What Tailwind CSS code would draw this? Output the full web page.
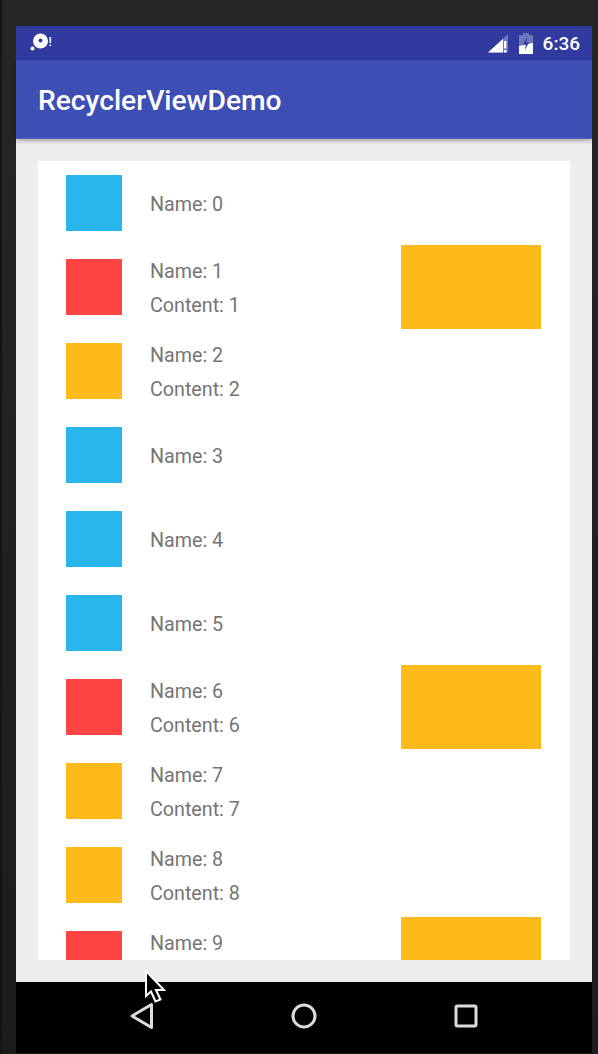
<!DOCTYPE html>
<html>
<head>
<meta charset="utf-8">
<script src="https://cdn.jsdelivr.net/npm/@tailwindcss/browser@4"></script>
</head>
<body class="m-0">
<div class="relative w-[598px] h-[1054px] overflow-hidden bg-gradient-to-b from-[#262626] to-[#1c1c1c] border-l-2 border-[#141414] pt-[26px] pl-[14px] font-['Roboto',sans-serif]">
  <div class="flex flex-col h-[1027px] w-[576px]">
    <div class="flex items-center justify-between h-[34px] bg-[#303a9f] pl-[14px] pr-[12px] text-white">
      <svg width="24" height="20" viewBox="0 0 24 20">
        <circle cx="10.5" cy="8" r="7.5" fill="#fff"/>
        <circle cx="10.5" cy="7.5" r="2" fill="#303a9f"/>
        <circle cx="2.5" cy="15.5" r="2" fill="#fff"/>
        <rect x="19.5" y="4" width="1.6" height="6" fill="#fff"/>
        <rect x="19.5" y="11.5" width="1.6" height="1.6" fill="#fff"/>
      </svg>
      <div class="flex items-center">
        <svg width="21" height="21" viewBox="0 0 21 21" class="mr-[10px]">
          <path d="M0 19.5 L20 1 V19.5 Z" fill="#fff" fill-opacity="0.3"/>
          <path d="M0 19.5 L15 6 V19.5 Z" fill="#fff"/>
          <rect x="16" y="8" width="2.4" height="7.5" fill="#fff"/>
          <rect x="16" y="17" width="2.4" height="2.5" fill="#fff"/>
        </svg>
        <svg width="14" height="21" viewBox="0 0 14 21" class="mr-[10px]">
          <path d="M4 0 H10 V2 H14 V21 H0 V2 H4 Z" fill="#fff" fill-opacity="0.3"/>
          <path d="M0 21 V13 L14 10 V21 Z" fill="#fff"/>
          <path d="M8.5 3.5 L4 11.5 H7 L5.5 17.5 L10 9.5 H7 Z" fill="#303a9f"/>
        </svg>
        <span class="text-[19px] leading-none font-medium">6:36</span>
      </div>
    </div>
    <div class="flex items-center h-[79px] bg-[#3d4fb5] pl-[22px] pt-[5px] text-white text-[28.2px] font-medium shadow-[0_2px_4px_rgba(0,0,0,0.3)] relative border-b border-[#5263c4]">RecyclerViewDemo</div>
    <div class="flex-1 bg-[#eeeeee] pt-[22px] pb-[22px] px-[22px] min-h-0">
      <div class="h-[799px] w-[532px] overflow-hidden bg-white text-[19.7px] text-[#757575]">
        <div class="flex h-[84px]">
          <div class="w-14 h-14 ml-7 mt-[14px] bg-[#29b6ec]"></div>
          <div class="ml-7 mt-[30px] leading-[28px]">Name: 0</div>
        </div>
        <div class="flex h-[84px]">
          <div class="w-14 h-14 ml-7 mt-[14px] bg-[#ff4444]"></div>
          <div class="ml-7 mt-[10px] leading-[34px]"><div>Name: 1</div><div>Content: 1</div></div>
          <div class="ml-auto mr-[29px] w-[140px] h-[84px] bg-[#ffbb1a]"></div>
        </div>
        <div class="flex h-[84px]">
          <div class="w-14 h-14 ml-7 mt-[14px] bg-[#ffbb1a]"></div>
          <div class="ml-7 mt-[10px] leading-[34px]"><div>Name: 2</div><div>Content: 2</div></div>
        </div>
        <div class="flex h-[84px]">
          <div class="w-14 h-14 ml-7 mt-[14px] bg-[#29b6ec]"></div>
          <div class="ml-7 mt-[30px] leading-[28px]">Name: 3</div>
        </div>
        <div class="flex h-[84px]">
          <div class="w-14 h-14 ml-7 mt-[14px] bg-[#29b6ec]"></div>
          <div class="ml-7 mt-[30px] leading-[28px]">Name: 4</div>
        </div>
        <div class="flex h-[84px]">
          <div class="w-14 h-14 ml-7 mt-[14px] bg-[#29b6ec]"></div>
          <div class="ml-7 mt-[30px] leading-[28px]">Name: 5</div>
        </div>
        <div class="flex h-[84px]">
          <div class="w-14 h-14 ml-7 mt-[14px] bg-[#ff4444]"></div>
          <div class="ml-7 mt-[10px] leading-[34px]"><div>Name: 6</div><div>Content: 6</div></div>
          <div class="ml-auto mr-[29px] w-[140px] h-[84px] bg-[#ffbb1a]"></div>
        </div>
        <div class="flex h-[84px]">
          <div class="w-14 h-14 ml-7 mt-[14px] bg-[#ffbb1a]"></div>
          <div class="ml-7 mt-[10px] leading-[34px]"><div>Name: 7</div><div>Content: 7</div></div>
        </div>
        <div class="flex h-[84px]">
          <div class="w-14 h-14 ml-7 mt-[14px] bg-[#ffbb1a]"></div>
          <div class="ml-7 mt-[10px] leading-[34px]"><div>Name: 8</div><div>Content: 8</div></div>
        </div>
        <div class="flex h-[43px] overflow-hidden">
          <div class="w-14 h-14 ml-7 mt-[14px] bg-[#ff4444]"></div>
          <div class="ml-7 mt-[10px] leading-[34px]"><div>Name: 9</div></div>
          <div class="ml-auto mr-[29px] w-[140px] h-[84px] bg-[#ffbb1a]"></div>
        </div>
      </div>
    </div>
    <div class="flex items-center h-[71px] bg-black shrink-0 pl-[114px] pb-[3px] gap-[137px]">
      <svg width="24" height="28" viewBox="0 0 24 28"><path d="M21.5 2.5 V25.5 L2 14 Z" fill="none" stroke="#dcdcdc" stroke-width="3" stroke-linejoin="round"/></svg>
      <svg width="26" height="26" viewBox="0 0 26 26"><circle cx="13" cy="13" r="11" fill="none" stroke="#dcdcdc" stroke-width="3"/></svg>
      <svg width="24" height="24" viewBox="0 0 24 24"><rect x="2" y="2" width="20" height="20" rx="1.5" fill="none" stroke="#dcdcdc" stroke-width="3"/></svg>
    </div>
  </div>
  <svg class="absolute left-[141px] top-[966px]" width="26" height="40" viewBox="0 0 26 40">
    <path d="M3 5 V30 L8 25.5 L12.5 35.5 L17.5 33.5 L13 24 H21 Z" fill="#000" stroke="#fff" stroke-width="2"/>
  </svg>
</div>
</body>
</html>
